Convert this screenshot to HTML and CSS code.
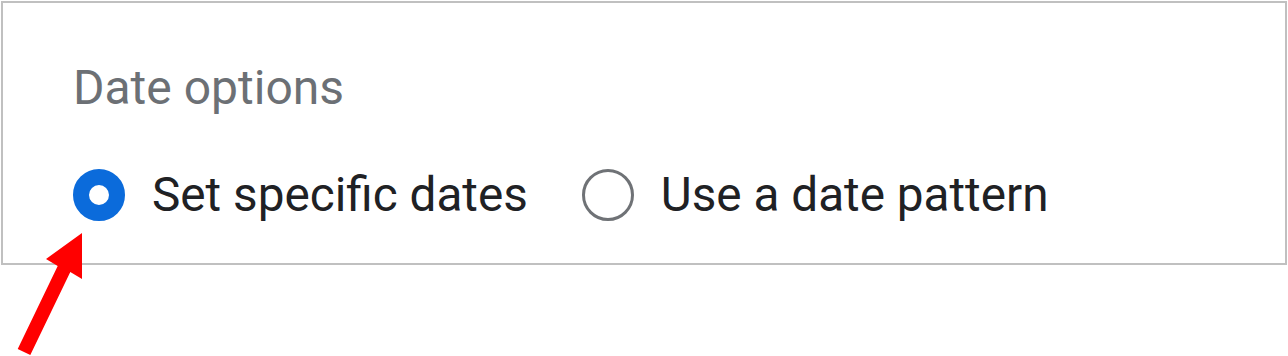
FILE: index.html
```html
<!DOCTYPE html>
<html lang="en">
<head>
<meta charset="utf-8">
<title>Date options</title>
<link rel="stylesheet" href="styles.css">
</head>
<body>
<div class="page">
  <section class="box">
    <div class="title">Date options</div>
    <div class="options">
      <label class="option">
        <span class="radio radio-on"></span>
        <span class="label">Set specific dates</span>
      </label>
      <label class="option">
        <span class="radio"></span>
        <span class="label">Use a date pattern</span>
      </label>
    </div>
  </section>
  <svg class="arrow" width="1288" height="356" viewBox="0 0 1288 356" aria-hidden="true">
    <polygon points="82,232 82,278 70.3,271.1 30.3,354.1 17.7,347.9 57.7,264.9 46,258" fill="#ff0000"/>
  </svg>
</div>
</body>
</html>
```
FILE: styles.css
```css
html, body {
  margin: 0;
  padding: 0;
  background: #ffffff;
}
.page {
  position: relative;
  width: 1288px;
  height: 356px;
  font-family: Roboto, "Liberation Sans", Arial, sans-serif;
}
.box {
  margin: 1px 0 0 1px;
  width: 1286px;
  height: 264px;
  box-sizing: border-box;
  border: 2px solid #c0c0c0;
  padding: 57px 0 0 70px;
}
.title {
  font-size: 48px;
  line-height: 56px;
  color: #6c7075;
}
.options {
  display: flex;
  align-items: center;
  gap: 54px;
  margin-top: 51px;
}
.option {
  display: flex;
  align-items: center;
  gap: 27px;
}
.radio {
  width: 52px;
  height: 52px;
  box-sizing: border-box;
  border-radius: 50%;
  border: 3px solid #6f7276;
  background: #ffffff;
  flex: none;
}
.radio-on {
  border: 16px solid #0b6bdb;
}
.label {
  font-size: 47.7px;
  line-height: 56px;
  color: #202124;
}
.arrow {
  position: absolute;
  left: 0;
  top: 0;
  pointer-events: none;
}
```
